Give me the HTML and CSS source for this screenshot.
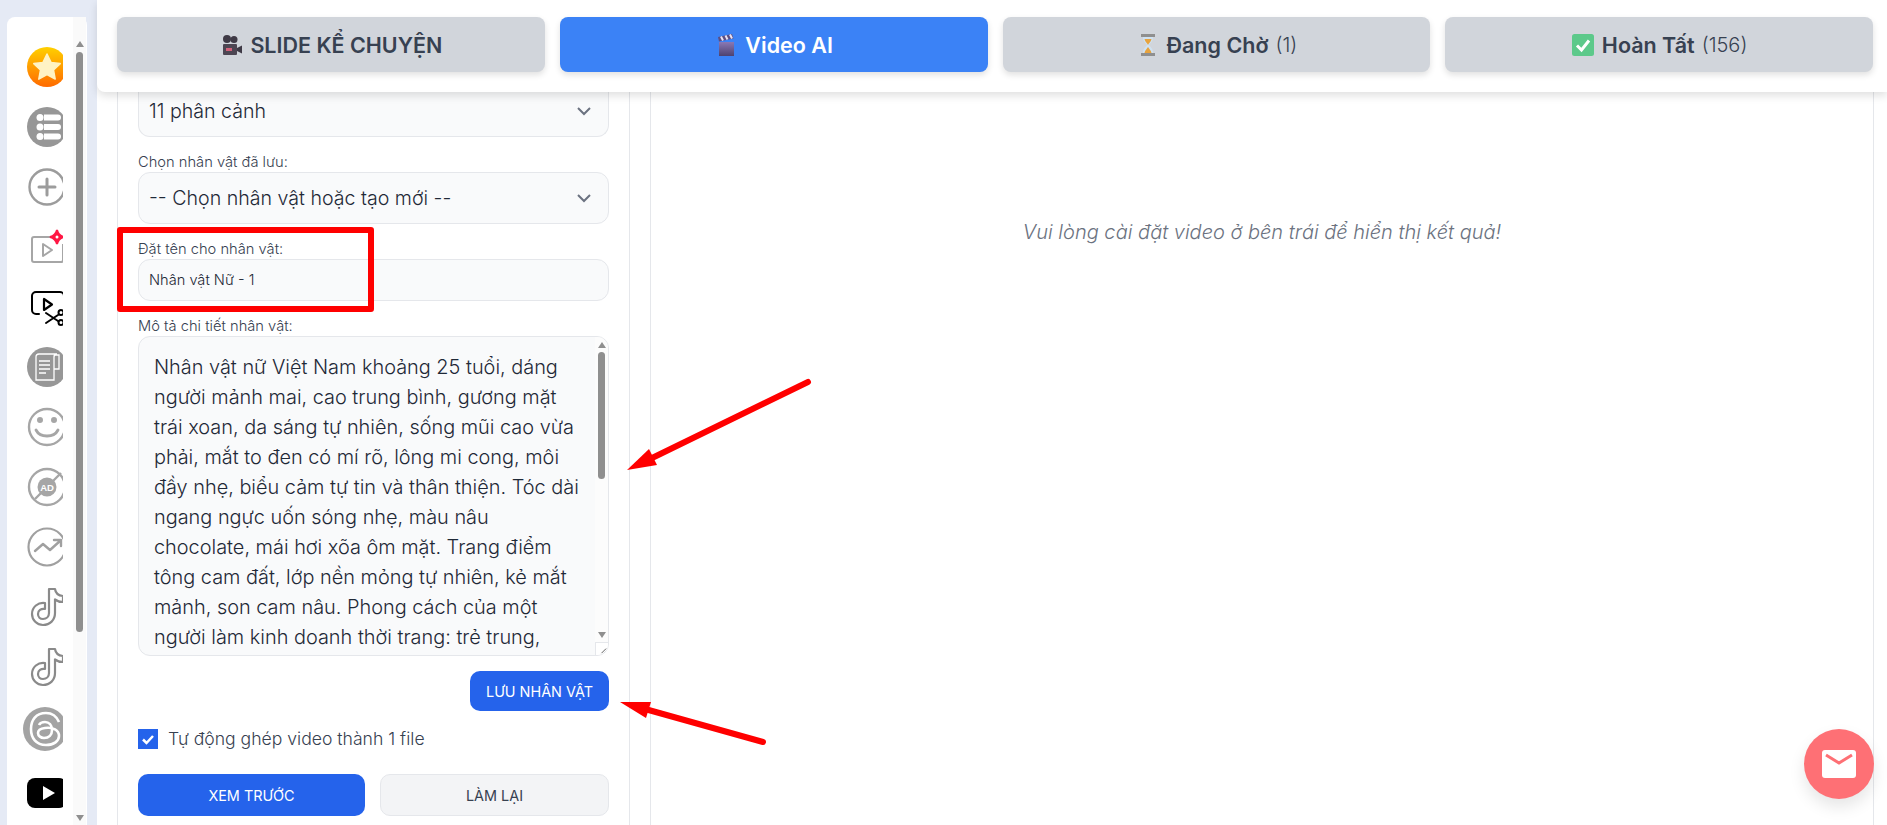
FILE: index.html
```html
<!DOCTYPE html>
<html lang="vi">
<head>
    <meta charset="UTF-8">
    <meta name="viewport" content="width=device-width, initial-scale=1.0">
    <title>Video AI</title>
    <link rel="stylesheet" href="styles.css">
</head>
<body>
    <aside class="sidebar">
        <div class="side-icons">
            <svg class="side-icon" viewBox="0 0 40 40"><defs><linearGradient id="gold" x1="0" y1="0" x2="0" y2="1"><stop offset="0" stop-color="#ffd000"/><stop offset="1" stop-color="#ff6a00"/></linearGradient></defs><circle cx="20" cy="20" r="20" fill="url(#gold)"/><path d="M20 7l4 8.400 9.200 1.200-6.700 6.400 1.700 9.100L20 27.700l-8.200 4.400 1.700-9.100-6.700-6.400 9.200-1.200z" fill="#fff3c4" stroke="#fff3c4" stroke-width="1.500" stroke-linejoin="round"/></svg>
            <svg class="side-icon" viewBox="0 0 40 40"><circle cx="20" cy="20" r="20" fill="#979797"/><g fill="#fff"><circle cx="13" cy="10.500" r="3.500"/><circle cx="13" cy="20" r="3.500"/><circle cx="13" cy="29.500" r="3.500"/><path d="M17 7.500h14a3 3 0 0 1 0 6H17zM17 17h14a3 3 0 0 1 0 6H17zM17 26.500h14a3 3 0 0 1 0 6H17z"/></g></svg>
            <svg class="side-icon" viewBox="0 0 40 40" fill="none" stroke="#9c9c9c" stroke-width="2.400" stroke-linecap="round"><circle cx="20" cy="20" r="17.500"/><path d="M20 12v16M12 20h16" stroke-width="3"/></svg>
            <svg class="side-icon" viewBox="0 0 40 40" fill="none" stroke="#a6a6a6" stroke-width="2"><path d="M24 10H7a2 2 0 0 0-2 2v21a2 2 0 0 0 2 2h27a2 2 0 0 0 2-2V17"/><path d="M16 17v12l9-6z" stroke-linejoin="round"/><path d="M30 3c1 4 3 6 7 7-4 1-6 3-7 7-1-4-3-6-7-7 4-1 6-3 7-7z" fill="#ff1744" stroke="#ff1744"/><circle cx="30" cy="10" r="1.500" fill="#fff" stroke="none"/></svg>
            <svg class="side-icon" viewBox="0 0 40 40" fill="none" stroke="#000" stroke-width="2" stroke-linecap="round"><path d="M12 27H9a4 4 0 0 1-4-4V9a4 4 0 0 1 4-4h24a4 4 0 0 1 4 4v3"/><path d="M17 12v11l8-5.500z" stroke-width="2.200" stroke-linejoin="round"/><path d="M19 26l12 8M19 36l12-8"/><circle cx="34" cy="25.500" r="2.500"/><circle cx="34" cy="35.500" r="2.500"/></svg>
            <svg class="side-icon" viewBox="0 0 40 40"><circle cx="20" cy="20" r="20" fill="#979797"/><g fill="none" stroke="#fff" stroke-width="1.300"><path d="M9 10a3 3 0 0 1 3-3h18a3 3 0 0 0-3 3v23H9z"/><path d="M27 8h5v14h-5"/><path d="M12 14h11M12 18h11M12 22h11M12 26h7"/></g></svg>
            <svg class="side-icon" viewBox="0 0 40 40" fill="none" stroke="#a6a6a6" stroke-width="2.400" stroke-linecap="round"><circle cx="20" cy="20" r="18"/><path d="M9 23c4 8 18 8 22 0" stroke-width="2.800"/><circle cx="13" cy="13" r="1.800" fill="#a6a6a6"/><circle cx="27" cy="13" r="1.800" fill="#a6a6a6"/></svg>
            <svg class="side-icon" viewBox="0 0 40 40" fill="none" stroke="#a6a6a6" stroke-width="2.400"><circle cx="20" cy="20" r="18"/><path d="M8 32l6-6M26 14l8-8"/><circle cx="20" cy="20" r="9.500" fill="#a6a6a6" stroke="none"/><text class="ad-label" x="20" y="23.500" text-anchor="middle">AD</text></svg>
            <svg class="side-icon" viewBox="0 0 40 40" fill="none" stroke="#a0a0a0" stroke-width="2.200" stroke-linecap="round" stroke-linejoin="round"><circle cx="20" cy="20" r="18.500"/><path d="M8 24l8-7 7 6 10-9M27 13h7v6" stroke-width="2.400"/></svg>
            <svg class="side-icon" viewBox="0 0 40 40" fill="#fff" stroke="#8a8a8a" stroke-width="2.200" stroke-linejoin="round"><path d="M22 2h6c.5 4 3 6.500 8 7v6c-3 0-6-1-8-2.500V26c0 7-5 12-12 12-6 0-11-5-11-11 0-7 6-12 13-11v6c-4-.6-7 1.500-7 5 0 3 2.200 5 5 5 3.500 0 6-2.500 6-6z"/></svg>
            <svg class="side-icon" viewBox="0 0 40 40" fill="#fff" stroke="#8a8a8a" stroke-width="2.200" stroke-linejoin="round"><path d="M22 2h6c.5 4 3 6.500 8 7v6c-3 0-6-1-8-2.500V26c0 7-5 12-12 12-6 0-11-5-11-11 0-7 6-12 13-11v6c-4-.6-7 1.500-7 5 0 3 2.200 5 5 5 3.500 0 6-2.500 6-6z"/></svg>
            <svg class="side-icon threads" viewBox="0 0 44 44"><circle cx="22" cy="22" r="22" fill="#a3a3a3"/><g fill="none" stroke="#fff" stroke-width="2.600"><path d="M36 15C33 8 28 6 23 6 13 6 8 13 8 22s5 16 15 16c8 0 13-4 13-9 0-6-6-9-14-8-5 .6-7 3-7 5 0 3 3 5 6 5 5 0 8-3 8-8s-3-8-7-8c-3 0-5 1-6 3"/></g></svg>
            <svg class="side-icon youtube" viewBox="0 0 40 30"><rect width="40" height="30" rx="8"/><path d="M16 8v14l12-7z" fill="#fff"/></svg>
        </div>
        <div class="side-scroll">
            <span class="arrow-up"></span>
            <span class="side-thumb"></span>
            <span class="arrow-down"></span>
        </div>
    </aside>

    <main class="main">
        <nav class="tabs">
            <button class="tab">
                <svg class="tab-icon" viewBox="0 0 24 24"><circle cx="8" cy="6" r="4" fill="#3f3a46"/><circle cx="15" cy="6.500" r="3.500" fill="#3f3a46"/><rect x="4" y="11" width="14" height="11" rx="1" fill="#4d4653"/><path d="M18 15l5-2.500v8L18 18z" fill="#3f3a46"/><rect x="7" y="15" width="6" height="3" fill="#d2607a"/></svg>
                SLIDE KỂ CHUYỆN
            </button>
            <button class="tab active">
                <svg class="tab-icon" viewBox="0 0 24 24"><defs><linearGradient id="clap" x1="0" y1="0" x2="0" y2="1"><stop offset="0" stop-color="#8a78b4"/><stop offset="1" stop-color="#4d4270"/></linearGradient></defs><rect x="5" y="9" width="15" height="14" fill="url(#clap)"/><path d="M4 4L18 1l1.500 4.500L5 8.500z" fill="#5d4e82"/><path d="M7 3.500l2 4M11.500 2.500l2 4M16 1.500l2 4" stroke="#e8e2f2" stroke-width="2"/></svg>
                Video AI
            </button>
            <button class="tab">
                <svg class="tab-icon" viewBox="0 0 24 24"><rect x="5" y="1" width="14" height="3" fill="#8f8f8f"/><rect x="5" y="20" width="14" height="3" fill="#8f8f8f"/><path d="M7 4h10c0 5-3 6-4 8 1 2 4 3 4 8H7c0-5 3-6 4-8-1-2-4-3-4-8z" fill="#cfe2f2"/><path d="M8.500 6h7c-.5 3-3 4-3.500 6-.5-2-3-3-3.500-6zM12 14c-1 2-3 3-3.500 6h7C15 17 13 16 12 14z" fill="#e8a33d"/></svg>
                Đang Chờ <span class="count">(1)</span>
            </button>
            <button class="tab">
                <svg class="tab-icon" viewBox="0 0 24 24"><rect x="1" y="1" width="22" height="22" rx="2.500" fill="#5cc98a"/><path d="M6 12.500l4.500 4.500L18 7.500" fill="none" stroke="#fff" stroke-width="3"/></svg>
                Hoàn Tất <span class="count">(156)</span>
            </button>
        </nav>

        <div class="panels">
            <section class="form-panel">
                <div class="select select-first">11 phân cảnh <svg class="chevron" viewBox="0 0 16 10"><path d="M2 2l6 6 6-6"/></svg></div>

                <label class="field-label">Chọn nhân vật đã lưu:</label>
                <div class="select">-- Chọn nhân vật hoặc tạo mới -- <svg class="chevron" viewBox="0 0 16 10"><path d="M2 2l6 6 6-6"/></svg></div>

                <label class="field-label label-name">Đặt tên cho nhân vật:</label>
                <div class="name-input">Nhân vật Nữ - 1</div>

                <label class="field-label label-desc">Mô tả chi tiết nhân vật:</label>
                <div class="textarea">
                    <p class="textarea-text">Nhân vật nữ Việt Nam khoảng 25 tuổi, dáng<br>người mảnh mai, cao trung bình, gương mặt<br>trái xoan, da sáng tự nhiên, sống mũi cao vừa<br>phải, mắt to đen có mí rõ, lông mi cong, môi<br>đầy nhẹ, biểu cảm tự tin và thân thiện. Tóc dài<br>ngang ngực uốn sóng nhẹ, màu nâu<br>chocolate, mái hơi xõa ôm mặt. Trang điểm<br>tông cam đất, lớp nền mỏng tự nhiên, kẻ mắt<br>mảnh, son cam nâu. Phong cách của một<br>người làm kinh doanh thời trang: trẻ trung,</p>
                    <div class="text-scroll">
                        <span class="arrow-up"></span>
                        <span class="text-thumb"></span>
                        <span class="arrow-down"></span>
                    </div>
                    <svg class="resizer" viewBox="0 0 13 13"><path d="M11 6l-5 5M11 9l-2 2" stroke="#555" fill="none"/></svg>
                </div>

                <div class="save-row"><button class="btn btn-primary btn-save">LƯU NHÂN VẬT</button></div>

                <div class="check-row">
                    <span class="checkbox"><svg viewBox="0 0 20 20"><path d="M5 10.500l3.500 3.500L15 7" fill="none" stroke="#fff" stroke-width="2.500"/></svg></span>
                    Tự động ghép video thành 1 file
                </div>

                <div class="action-row">
                    <button class="btn btn-primary">XEM TRƯỚC</button>
                    <button class="btn btn-reset">LÀM LẠI</button>
                </div>
            </section>

            <section class="result-panel">
                <p class="empty-note">Vui lòng cài đặt video ở bên trái để hiển thị kết quả!</p>
            </section>
        </div>
    </main>

    <!-- annotations drawn over the screenshot -->
    <div class="red-box"></div>
    <svg class="marks" viewBox="0 0 1887 825">
        <path d="M808 382L650 459" stroke="#ff0000" stroke-width="6" stroke-linecap="round"/>
        <path d="M627 470L649 449L657 465z" fill="#ff0000"/>
        <path d="M763 742L645 709" stroke="#ff0000" stroke-width="6" stroke-linecap="round"/>
        <path d="M620 702L651 702L646 718z" fill="#ff0000"/>
    </svg>

    <button class="mail-btn">
        <svg viewBox="0 0 34 28"><rect width="34" height="28" rx="3" fill="#fff"/><path d="M4 5l13 8 13-8" fill="none" stroke="#fe7075" stroke-width="3"/></svg>
    </button>
</body>
</html>
```

FILE: styles.css
```css
* {
    margin: 0;
    padding: 0;
    box-sizing: border-box;
}

html,
body {
    height: 100%;
    overflow: hidden;
}

body {
    display: flex;
    padding-left: 7px;
    background: #e5eaf5;
    font-family: 'Inter', 'Noto Sans', sans-serif;
    color: #1f2937;
}

button {
    font-family: inherit;
    border: none;
}

/* left icon rail */
.sidebar {
    display: flex;
    flex: 0 0 80px;
    margin: 17px 10px 0 0;
    background: #fff;
    border-radius: 8px 8px 0 0;
}

.side-icons {
    display: flex;
    flex-direction: column;
    align-items: flex-start;
    gap: 20px;
    width: 56px;
    padding: 30px 0 0 20px;
    overflow: hidden;
}

.side-icon {
    display: block;
    flex: none;
    width: 40px;
    height: 40px;
}

.side-icon.threads {
    width: 44px;
    height: 44px;
    margin: 0 0 0 -4px;
}

.side-icon.youtube {
    width: 40px;
    height: 30px;
    margin-top: 7px;
}

.ad-label {
    font-family: 'Liberation Sans', sans-serif;
    font-size: 9.5px;
    font-weight: 700;
    fill: #fff;
    stroke: none;
}

.side-scroll {
    position: relative;
    width: 13px;
    margin: 0 1px 0 auto;
    background: #fafafa;
}

.side-thumb {
    position: absolute;
    top: 35px;
    left: 3px;
    width: 7px;
    height: 580px;
    background: #8f8f8f;
    border-radius: 4px;
}

.arrow-up,
.arrow-down {
    position: absolute;
    left: 50%;
    margin-left: -4px;
    border-left: 4px solid transparent;
    border-right: 4px solid transparent;
}

.arrow-up {
    top: 24px;
    border-bottom: 6px solid #8f8f8f;
}

.arrow-down {
    bottom: 4px;
    border-top: 6px solid #8f8f8f;
}

/* main column */
.main {
    display: flex;
    flex-direction: column;
    flex: 1;
    min-width: 0;
    height: 100%;
    background: #fff;
}

.tabs {
    position: relative;
    z-index: 2;
    display: grid;
    grid-template-columns: repeat(4, 1fr);
    gap: 15px;
    flex: 0 0 92px;
    padding: 17px 14px 20px 20px;
    background: #fff;
    border-radius: 0 0 0 8px;
    box-shadow: 0 4px 8px rgba(0, 0, 0, 0.12);
}

.tab {
    display: flex;
    align-items: center;
    justify-content: center;
    gap: 7px;
    font-size: 21.5px;
    font-weight: 600;
    color: #374151;
    background: #d1d5db;
    border-radius: 8px;
    box-shadow: 0 3px 6px rgba(0, 0, 0, 0.12);
}

.tab.active {
    color: #fff;
    background: #3b82f6;
}

.count {
    font-size: 20px;
    font-weight: 300;
}

.tab-icon {
    width: 24px;
    height: 24px;
}

.panels {
    display: flex;
    flex: 1;
    gap: 20px;
    min-height: 0;
    padding-left: 20px;
    padding-right: 13px;
}

.form-panel {
    flex: 0 0 513px;
    padding: 0 20px;
    border-left: 1px solid #e5e7eb;
    border-right: 1px solid #e5e7eb;
}

.field-label {
    display: block;
    height: 20px;
    font-size: 14.7px;
    font-weight: 300;
    line-height: 20px;
    color: #374151;
}

.select {
    display: flex;
    align-items: center;
    justify-content: space-between;
    height: 52px;
    padding: 0 16px 0 10px;
    font-size: 19.6px;
    font-weight: 300;
    background: #f9fafb;
    border: 1px solid #e5e7eb;
    border-radius: 12px;
}

.select-first {
    height: 45px;
    padding-bottom: 6px;
    margin-bottom: 15px;
    border-top: none;
    border-radius: 0 0 12px 12px;
}

.chevron {
    width: 16px;
    height: 10px;
    fill: none;
    stroke: #6b7280;
    stroke-width: 2;
}

.label-name {
    margin-top: 15px;
}

.name-input {
    display: flex;
    align-items: center;
    height: 42px;
    padding-left: 10px;
    font-size: 14.6px;
    font-weight: 300;
    background: #f9fafb;
    border: 1px solid #e5e7eb;
    border-radius: 12px;
}

.label-desc {
    margin-top: 15px;
}

.textarea {
    position: relative;
    height: 320px;
    padding: 15px 0 0 15px;
    overflow: hidden;
    background: #f9fafb;
    border: 1px solid #e5e7eb;
    border-radius: 12px;
}

.textarea-text {
    font-size: 19.9px;
    font-weight: 300;
    line-height: 30px;
    white-space: nowrap;
}

.text-scroll {
    position: absolute;
    top: 0;
    right: 0;
    bottom: 13px;
    width: 13px;
    background: #fcfcfc;
}

.text-scroll .arrow-up {
    top: 5px;
}

.text-thumb {
    position: absolute;
    top: 15px;
    left: 3px;
    width: 7px;
    height: 127px;
    background: #8f8f8f;
    border-radius: 4px;
}

.resizer {
    position: absolute;
    right: 0;
    bottom: 0;
    width: 13px;
    height: 13px;
    background: #fff;
    border-left: 1px solid #e5e7eb;
    border-top: 1px solid #e5e7eb;
}

.save-row {
    display: flex;
    justify-content: flex-end;
    margin-top: 15px;
}

.btn {
    height: 42px;
    font-size: 14.4px;
    font-weight: 400;
    border-radius: 10px;
}

.btn-primary {
    color: #fff;
    background: #2563eb;
}

.btn-save {
    width: 139px;
    height: 40px;
}

.check-row {
    display: flex;
    align-items: center;
    gap: 10px;
    margin-top: 18px;
    font-size: 17.6px;
    font-weight: 300;
    line-height: 20px;
    color: #374151;
}

.checkbox {
    display: block;
    width: 20px;
    height: 20px;
    background: #2563eb;
}

.action-row {
    display: grid;
    grid-template-columns: 227px 1fr;
    gap: 15px;
    margin-top: 25px;
}

.btn-reset {
    color: #374151;
    background: #f3f4f6;
    border: 1px solid #e5e7eb;
}

.result-panel {
    flex: 1;
    padding-top: 126px;
    border-left: 1px solid #e5e7eb;
    border-right: 1px solid #e5e7eb;
}

.empty-note {
    font-size: 20px;
    font-style: italic;
    font-weight: 300;
    line-height: 28px;
    text-align: center;
    color: #6b7280;
}

/* things lying over the page */
.red-box {
    position: absolute;
    top: 227px;
    left: 117px;
    width: 257px;
    height: 85px;
    border: 6px solid #ff0000;
    border-radius: 3px;
}

.marks {
    position: absolute;
    top: 0;
    left: 0;
    width: 1887px;
    height: 825px;
    pointer-events: none;
}

.mail-btn {
    position: absolute;
    top: 729px;
    left: 1804px;
    display: flex;
    align-items: center;
    justify-content: center;
    width: 70px;
    height: 70px;
    background: #fe7075;
    border-radius: 50%;
    box-shadow: 0 8px 16px rgba(0, 0, 0, 0.1);
}

.mail-btn svg {
    width: 34px;
    height: 28px;
}
```
